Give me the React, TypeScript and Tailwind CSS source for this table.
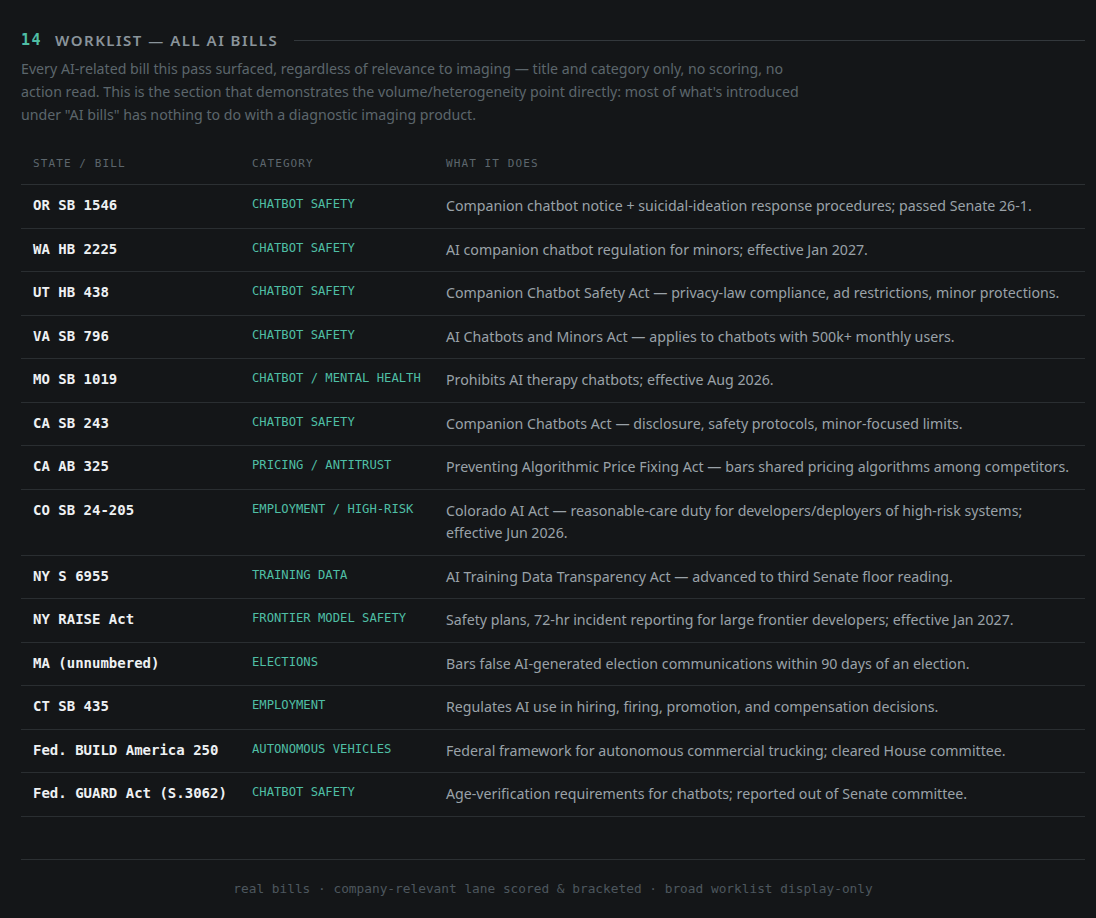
import React from "react";

interface Bill {
  bill: string;
  category: string;
  does: string;
}

const bills: Bill[] = [
  { bill: "OR SB 1546", category: "Chatbot safety", does: "Companion chatbot notice + suicidal-ideation response procedures; passed Senate 26-1." },
  { bill: "WA HB 2225", category: "Chatbot safety", does: "AI companion chatbot regulation for minors; effective Jan 2027." },
  { bill: "UT HB 438", category: "Chatbot safety", does: "Companion Chatbot Safety Act — privacy-law compliance, ad restrictions, minor protections." },
  { bill: "VA SB 796", category: "Chatbot safety", does: "AI Chatbots and Minors Act — applies to chatbots with 500k+ monthly users." },
  { bill: "MO SB 1019", category: "Chatbot / mental health", does: "Prohibits AI therapy chatbots; effective Aug 2026." },
  { bill: "CA SB 243", category: "Chatbot safety", does: "Companion Chatbots Act — disclosure, safety protocols, minor-focused limits." },
  { bill: "CA AB 325", category: "Pricing / antitrust", does: "Preventing Algorithmic Price Fixing Act — bars shared pricing algorithms among competitors." },
  { bill: "CO SB 24-205", category: "Employment / high-risk", does: "Colorado AI Act — reasonable-care duty for developers/deployers of high-risk systems; effective Jun 2026." },
  { bill: "NY S 6955", category: "Training data", does: "AI Training Data Transparency Act — advanced to third Senate floor reading." },
  { bill: "NY RAISE Act", category: "Frontier model safety", does: "Safety plans, 72-hr incident reporting for large frontier developers; effective Jan 2027." },
  { bill: "MA (unnumbered)", category: "Elections", does: "Bars false AI-generated election communications within 90 days of an election." },
  { bill: "CT SB 435", category: "Employment", does: "Regulates AI use in hiring, firing, promotion, and compensation decisions." },
  { bill: "Fed. BUILD America 250", category: "Autonomous vehicles", does: "Federal framework for autonomous commercial trucking; cleared House committee." },
  { bill: "Fed. GUARD Act (S.3062)", category: "Chatbot safety", does: "Age-verification requirements for chatbots; reported out of Senate committee." },
];

const mono = "font-['DejaVu_Sans_Mono','Liberation_Mono',monospace]";
const sans = "font-['Noto_Sans','Open_Sans',sans-serif]";

export default function App() {
  return (
    <div className={`min-h-screen bg-[#141618] pl-[21px] pr-[11px] pt-[30px] pb-8 ${sans}`}>
      {/* Section header */}
      <div className="flex items-center gap-[13px] h-[20px]">
        <span className={`${mono} text-[15px] font-bold tracking-[0.1em] text-[#4fbfa5]`}>14</span>
        <span className="text-[15px] font-semibold uppercase tracking-[0.1em] text-[#8a949b]">
          Worklist — All AI bills
        </span>
        <div className="ml-[3px] flex-1 h-px bg-[#33383c]" />
      </div>

      <p className="mt-[7px] max-w-[800px] text-[14.2px] leading-[23px] text-[#5c666c]">
        Every AI-related bill this pass surfaced, regardless of relevance to imaging — title and category only, no
        scoring, no action read. This is the section that demonstrates the volume/heterogeneity point directly: most of
        what's introduced under "AI bills" has nothing to do with a diagnostic imaging product.
      </p>

      {/* Table */}
      <table className="mt-[14px] w-full border-collapse">
        <thead>
          <tr className="border-b border-[#2c3033]">
            {["State / bill", "Category", "What it does"].map((h, i) => (
              <th
                key={h}
                className={`${mono} px-3 pt-[16px] pb-[12px] text-left text-[11px] leading-[16px] font-normal uppercase tracking-[0.1em] text-[#5d666d] ${
                  i === 0 ? "w-[219px]" : i === 1 ? "w-[194px]" : ""
                }`}
              >
                {h}
              </th>
            ))}
          </tr>
        </thead>
        <tbody>
          {bills.map((b) => (
            <tr key={b.bill} className="border-b border-[#2a2e31] align-top">
              <td className={`${mono} px-3 py-[10px] text-[14px] leading-[20px] font-bold text-[#eef1f3] whitespace-nowrap`}>
                {b.bill}
              </td>
              <td className={`${mono} px-3 py-[10px] text-[12.2px] leading-[18px] uppercase text-[#4fbfa5]`}>
                {b.category}
              </td>
              <td className="px-3 py-[10px] text-[14.2px] leading-[22.5px] text-[#9aa2a8]">{b.does}</td>
            </tr>
          ))}
        </tbody>
      </table>

      {/* Footer */}
      <div className="mt-[42px] border-t border-[#2c3033] pt-[20px] text-center">
        <p className={`${mono} text-[12.8px] leading-[18px] text-[#4d575e]`}>
          real bills · company-relevant lane scored &amp; bracketed · broad worklist display-only
        </p>
      </div>
    </div>
  );
}
